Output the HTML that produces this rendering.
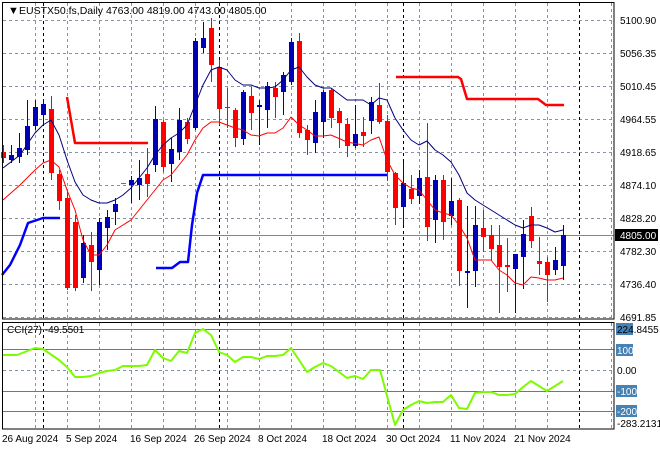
<!DOCTYPE html>
<html><head><meta charset="utf-8"><style>
html,body{margin:0;padding:0;background:#fff;}
svg{display:block;font-family:"Liberation Sans",sans-serif;}
</style></head><body>
<svg id="c" width="660" height="450" viewBox="0 0 660 450" xmlns="http://www.w3.org/2000/svg">
<rect width="660" height="450" fill="#fff"/>
<g id="grid"></g>
<g id="ind"></g>
<g id="cand"></g>
<g id="lines"></g>
<rect x="2.5" y="2.5" width="611.5" height="316.5" fill="none" stroke="#000" stroke-width="1"/>
<rect x="2.5" y="322.5" width="611.5" height="106.5" fill="none" stroke="#000" stroke-width="1"/>
<text x="8" y="14" font-size="11" fill="#000">▼</text>
<text x="19" y="14" font-size="10.5" fill="#000">EUSTX50.fs,Daily  4763.00 4819.00 4743.00 4805.00</text>
<g font-size="10" fill="#000">
<text x="620" y="24">5100.90</text>
<text x="620" y="57">5056.35</text>
<text x="620" y="90">5010.45</text>
<text x="620" y="123">4964.55</text>
<text x="620" y="156">4918.65</text>
<text x="620" y="189">4874.10</text>
<text x="620" y="222">4828.20</text>
<rect x="615" y="229" width="43" height="12" fill="#000"/>
<text x="620" y="239" fill="#fff">4805.00</text>
<text x="620" y="255">4782.30</text>
<text x="620" y="288">4736.40</text>
<text x="620" y="321">4691.85</text>
<rect x="616" y="323" width="17" height="12" fill="#4682b4"/>
<text x="617" y="333">224.8455</text>
<rect x="616" y="344" width="17" height="12" fill="#4682b4"/>
<text x="617" y="354" fill="#fff">100</text>
<text x="617" y="374">0.00</text>
<rect x="616" y="385" width="21" height="12" fill="#4682b4"/>
<text x="617" y="395" fill="#fff">-100</text>
<rect x="616" y="405" width="21" height="12" fill="#4682b4"/>
<text x="617" y="415" fill="#fff">-200</text>
<text x="617" y="427">-283.2131</text>
<text x="7" y="333" fill="#000">CCI(27) -49.5501</text>
<text x="2" y="442">26 Aug 2024</text>
<text x="66" y="442">5 Sep 2024</text>
<text x="130" y="442">16 Sep 2024</text>
<text x="194" y="442">26 Sep 2024</text>
<text x="258" y="442">8 Oct 2024</text>
<text x="322" y="442">18 Oct 2024</text>
<text x="386" y="442">30 Oct 2024</text>
<text x="450" y="442">11 Nov 2024</text>
<text x="514" y="442">21 Nov 2024</text>
</g>
</svg>
<script>
var NS="http://www.w3.org/2000/svg";
function el(p,t,a){var e=document.createElementNS(NS,t);for(var k in a)e.setAttribute(k,a[k]);document.getElementById(p).appendChild(e);return e;}
var gc="#8494a4";
[20,53,86,119,152,185,218,251,284,317].forEach(function(y){el("grid","line",{x1:3,x2:614,y1:y+.5,y2:y+.5,stroke:gc,"stroke-dasharray":"3,3"});});
for(var x=35;x<614;x+=32){el("grid","line",{x1:x+.5,x2:x+.5,y1:3,y2:318,stroke:gc,"stroke-dasharray":"3,3"});el("grid","line",{x1:x+.5,x2:x+.5,y1:323,y2:429,stroke:gc,"stroke-dasharray":"3,3"});}
[43,219,403,579].forEach(function(x){el("grid","line",{x1:x+.5,x2:x+.5,y1:3,y2:318,stroke:"#000","stroke-dasharray":"3,3"});el("grid","line",{x1:x+.5,x2:x+.5,y1:323,y2:429,stroke:"#000","stroke-dasharray":"3,3"});});
el("grid","line",{x1:3,x2:614,y1:370.5,y2:370.5,stroke:gc,"stroke-dasharray":"3,3"});
[329,349,391,411].forEach(function(y){el("grid","line",{x1:3,x2:614,y1:y+.5,y2:y+.5,stroke:"#4682b4"});});
el("grid","line",{x1:3,x2:614,y1:235.5,y2:235.5,stroke:"#778899"});
var C=[[3,152,158,145,163,'r'],[11,155,160,145,163,'b'],[19,148,157,133,163,'b'],[27,126,150,100,155,'b'],[35,107,126,100,130,'b'],[43,104,115,100,125,'b'],[51,109,173,96,180,'r'],[59,174,201,170,210,'r'],[67,198,288,192,290,'r'],[75,222,288,215,291,'r'],[83,243,278,235,283,'b'],[91,245,262,232,291,'r'],[99,222,270,218,285,'b'],[107,217,228,210,250,'b'],[115,204,212,198,225,'b'],[123,183,184,183,184,'g'],[131,180,185,176,203,'b'],[139,178,185,160,200,'b'],[147,174,184,148,197,'r'],[155,119,165,106,172,'b'],[163,122,167,120,172,'r'],[171,149,164,138,182,'b'],[179,120,152,108,160,'b'],[187,122,139,118,144,'r'],[195,41,128,38,130,'b'],[203,38,48,22,53,'b'],[211,28,65,18,82,'r'],[219,67,109,60,125,'r'],[227,107,108,88,128,'r'],[235,110,138,108,147,'r'],[243,92,139,90,145,'b'],[251,96,113,87,130,'r'],[259,105,107,100,145,'b'],[267,86,110,82,128,'b'],[275,88,97,82,118,'r'],[283,75,92,72,115,'b'],[291,42,82,38,85,'b'],[299,41,133,33,138,'r'],[307,130,140,125,155,'r'],[315,112,143,100,153,'b'],[323,92,122,90,138,'b'],[331,90,118,88,128,'r'],[339,111,123,108,148,'r'],[347,124,146,118,157,'r'],[355,134,146,105,148,'b'],[363,132,136,117,147,'r'],[371,102,121,97,134,'b'],[379,105,122,83,124,'r'],[387,121,172,115,181,'r'],[395,173,208,172,225,'r'],[403,183,207,162,225,'b'],[411,189,199,175,204,'r'],[419,178,196,170,204,'b'],[427,177,227,123,241,'r'],[435,180,220,175,243,'b'],[443,180,222,175,240,'r'],[451,201,216,178,225,'b'],[459,200,271,198,286,'r'],[467,271,273,206,308,'b'],[475,225,271,206,287,'b'],[483,228,237,210,252,'r'],[491,235,249,225,260,'r'],[499,245,267,225,313,'r'],[507,265,267,238,292,'r'],[515,254,269,254,313,'b'],[523,234,257,220,289,'b'],[531,216,241,207,248,'r'],[539,261,264,237,275,'r'],[547,262,275,257,302,'r'],[555,260,270,247,275,'b'],[563,235,266,225,280,'b']];
C.forEach(function(c){var col=c[5]=='b'?'#0000b4':(c[5]=='r'?'#ff0000':'#00c000');
el("cand","line",{x1:c[0]+.5,x2:c[0]+.5,y1:c[3],y2:c[4],stroke:col});
el("cand","rect",{x:c[0]-2,y:c[1],width:5,height:Math.max(1,c[2]-c[1]),fill:col});});
function pl(pts,col,w){el("lines","polyline",{points:pts,fill:"none",stroke:col,"stroke-width":w,"stroke-linejoin":"round"});}
pl("3,168 20,155 35,133 43,125 51,120 59,135 67,160 75,182 83,195 91,200 99,203 107,203 115,200 123,195 131,188 139,178 147,168 155,155 163,145 171,138 179,133 187,125 195,105 203,85 211,70 219,67 227,70 235,80 243,85 251,85 259,88 267,88 275,87 283,80 291,70 299,67 307,77 315,85 323,88 331,88 347,100 363,100 371,105 379,98 387,100 395,118 403,130 411,140 419,145 427,141 435,150 443,155 451,162 459,175 467,193 475,200 483,205 491,210 499,215 507,220 515,225 523,228 531,225 539,225 547,228 555,232 563,230","#000080",1);
pl("3,200 20,185 35,170 43,163 51,160 59,167 67,190 75,210 83,240 91,255 99,255 107,245 115,230 123,225 131,220 139,210 147,200 155,190 163,180 171,175 179,165 187,155 195,140 203,128 211,122 219,122 227,125 235,128 243,130 251,135 259,136 267,133 275,133 283,128 291,117 299,125 307,130 315,136 323,136 331,135 347,142 363,145 371,140 379,137 387,160 395,175 403,183 411,188 419,190 427,200 435,210 443,213 451,215 459,225 467,238 475,260 483,260 491,260 499,270 507,275 515,283 523,285 531,277 539,278 547,280 555,280 563,278","#ff0000",1);
pl("67,97 75,143 148,143","#ff0000",2.5);
pl("396,77 458,77 461,79 467,99 538,99 546,105 564,105","#ff0000",2.5);
pl("2,275 10,265 20,245 28,223 43,218 60,218","#0000ff",2.5);
pl("156,268 172,268 180,262 188,262 192,225 197,193 203,175 387,175","#0000ff",2.5);
pl("3,355 17,355 35,348 43,349 59,360 67,367 75,377 83,377 91,376 99,373 107,371 115,370 123,366 139,366 147,365 155,350 163,358 171,361 179,351 187,353 195,333 203,329 211,335 219,352 227,355 235,362 243,357 251,357 259,359 267,356 275,356 283,355 291,348 299,360 307,372 315,367 323,363 331,366 339,372 347,378 355,376 363,379 371,370 380,370 395,425 403,410 411,405 419,401 427,403 435,402 443,402 451,395 459,408 467,409 475,393 483,392 491,392 499,395 507,395 515,394 523,387 531,381 539,386 547,391 555,386 563,381","#7cfc00",2);
</script>
</body></html>
